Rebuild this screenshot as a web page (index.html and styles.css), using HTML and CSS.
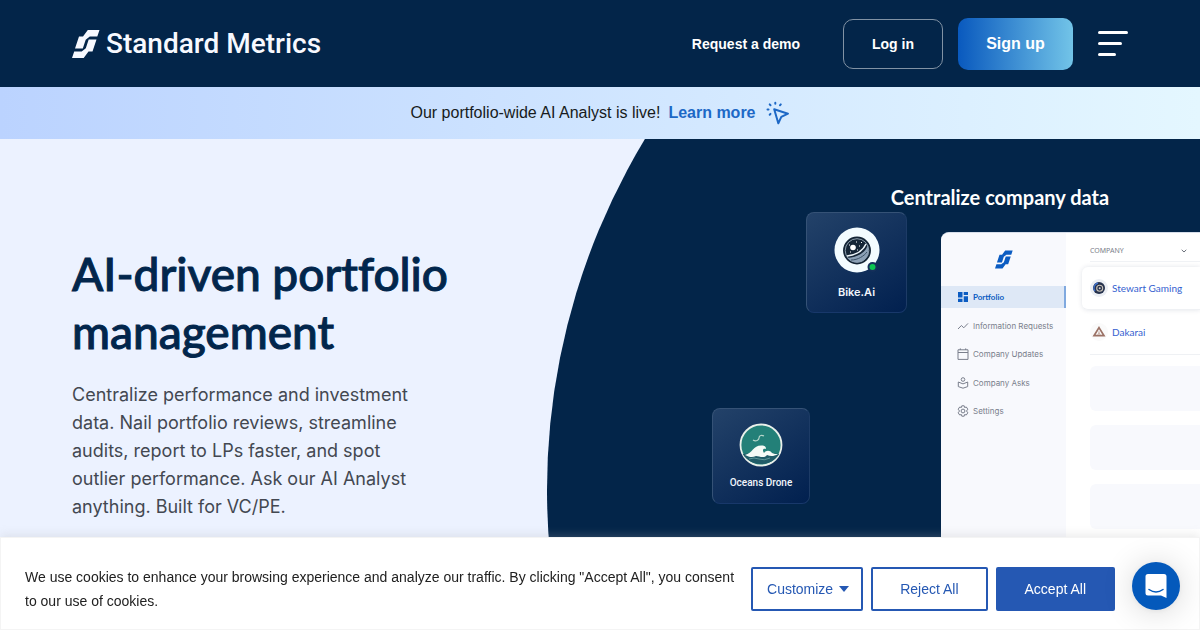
FILE: index.html
```html
<!DOCTYPE html>
<html lang="en">
<head>
<meta charset="utf-8">
<meta name="viewport" content="width=device-width, initial-scale=1">
<title>Standard Metrics</title>
<link rel="stylesheet" href="styles.css">
</head>
<body>
<svg class="defs" aria-hidden="true">
  <symbol id="mark" viewBox="0 0 28 28">
    <path d="M15.8 0H27.500L25.300 6.600H17.800L13.700 9.800L10.800 18.600H3L7 6.600H11ZM11.700 28H0L2.200 21.400H9.700L13.800 18.200L16.700 9.400H24.500L20.500 21.400H16.500Z"/>
  </symbol>
</svg>

<header class="header">
  <a class="logo" href="#">
    <svg class="logo-mark" aria-hidden="true"><use href="#mark"/></svg>
    <span>Standard Metrics</span>
  </a>
  <nav class="nav">
    <a class="nav-link" href="#">Request a demo</a>
    <a class="login" href="#">Log in</a>
    <a class="signup" href="#">Sign up</a>
    <button class="menu" type="button" aria-label="Menu"><span></span><span></span><span></span></button>
  </nav>
</header>

<div class="banner">
  <span>Our portfolio-wide AI Analyst is live!</span>
  <a class="banner-link" href="#">Learn more
    <svg class="cursor" viewBox="0 0 24 24" aria-hidden="true"><path d="M8.2 8.2L22 12.7L15.3 15.8L12.3 22.300Z"/><path d="M9.300 1.8V2.800M3.700 3.400L4.500 4.200M1.500 8.600H2.500M3.700 13.700L4.500 12.900M14 4.200L14.800 3.400"/></svg>
  </a>
</div>

<main class="hero">
  <section class="copy">
    <h1 class="title">AI-driven portfolio management</h1>
    <p class="lead">Centralize performance and investment data. Nail portfolio reviews, streamline audits, report to LPs faster, and spot outlier performance. Ask our AI Analyst anything. Built for VC/PE.</p>
  </section>

  <section class="visual">
    <h2 class="visual-title">Centralize company data</h2>
    <div class="app">
      <aside class="side">
        <svg class="side-mark" aria-hidden="true"><use href="#mark"/></svg>
        <ul class="side-list">
          <li class="side-item active">
            <svg viewBox="0 0 12 12" aria-hidden="true"><path class="solid" d="M1 1H5.5V6.5H1ZM6.7 1H11V4H6.7ZM6.7 5.3H11V11H6.7ZM1 7.8H5.5V11H1Z"/></svg>Portfolio</li>
          <li class="side-item">
            <svg viewBox="0 0 12 12" aria-hidden="true"><path d="M1 9L4.4 5.5L6.8 7.8L11 3.4"/></svg>Information Requests</li>
          <li class="side-item">
            <svg viewBox="0 0 12 12" aria-hidden="true"><path d="M1 1.8H11V11.4H1ZM1 4.5H11M3.3 .4V2M8.7 .4V2"/></svg>Company Updates</li>
          <li class="side-item">
            <svg viewBox="0 0 12 12" aria-hidden="true"><circle cx="6" cy="2.5" r="1.8"/><path d="M1.3 5V9.6L6 11.2L10.7 9.6V5L6 6.9Z"/></svg>Company Asks</li>
          <li class="side-item">
            <svg viewBox="0 0 12 12" aria-hidden="true"><path d="M4.8 .8H7.2L7.6 2.5L9.3 2L10.8 4.2L9.5 6L10.8 7.8L9.3 10L7.6 9.5L7.2 11.2H4.8L4.4 9.5L2.7 10L1.2 7.8L2.5 6L1.2 4.2L2.7 2L4.4 2.5Z"/><circle cx="6" cy="6" r="1.9"/></svg>Settings</li>
        </ul>
      </aside>
      <div class="companies">
        <div class="companies-head">
          <span>COMPANY</span>
          <svg viewBox="0 0 8 8" aria-hidden="true"><path d="M1.7 2.8L4 5L6.3 2.8"/></svg>
        </div>
        <div class="company raised">
          <svg viewBox="0 0 18 18" aria-hidden="true"><circle cx="9" cy="9" r="9" fill="#eceff4"/><circle cx="9" cy="9" r="6" fill="#26324d"/><path d="M5 12A5 5 0 0 1 8 4" fill="none" stroke="#3d70cc" stroke-width="1.3"/><circle cx="9.7" cy="9.2" r="3" fill="none" stroke="#c9c2b8" stroke-width="1.1"/><circle cx="9.7" cy="9.2" r="1" fill="#d8d0c6"/></svg>
          <a href="#">Stewart Gaming</a>
        </div>
        <div class="company">
          <svg viewBox="0 0 18 18" aria-hidden="true"><circle cx="9" cy="9" r="9" fill="#fafafa"/><path d="M9 4.6L14 12.7H4Z" fill="none" stroke="#9b7266" stroke-width="1.7"/><path d="M9 8V12M7.6 12L9 9.5L10.4 12" fill="none" stroke="#c3aaa1" stroke-width=".8"/></svg>
          <a href="#">Dakarai</a>
        </div>
        <div class="blank"></div>
        <div class="blank"></div>
        <div class="blank"></div>
      </div>
    </div>

    <div class="card card-bike">
      <svg class="card-icon" viewBox="0 0 46 46" aria-hidden="true">
        <circle cx="23" cy="23" r="22.5" fill="#f3fcff"/>
        <circle cx="23" cy="23.5" r="13.2" fill="#142536" stroke="#142536" stroke-width="1.5"/>
        <circle cx="23" cy="23.5" r="11.8" fill="none" stroke="#a9bdca" stroke-width=".8"/>
        <path d="M33.500 18C32 26 23 30 13.500 31C18 37 28 37 32 31C35 28 35 23 33.500 18Z" fill="#8ba0b5"/>
        <path d="M13 29C21 28 29 24 32 17" fill="none" stroke="#eef7fb" stroke-width="1.500"/>
        <path d="M17 33C24 33 30 29 33 25" fill="none" stroke="#3c5368" stroke-width="1"/>
        <circle cx="19" cy="20.5" r="2.8" fill="#fff"/>
        <path d="M22 15H23M27 15.5H28M25 19H26M15 18H16M16 25H17M23 23H24" stroke="#fff" stroke-width="1"/>
        <circle cx="38.5" cy="40" r="5" fill="#15305a"/><circle cx="38.5" cy="40" r="3" fill="#0cc552"/>
      </svg>
      <span>Bike.Ai</span>
    </div>
    <div class="card card-oceans">
      <svg class="card-icon" viewBox="0 0 44 44" aria-hidden="true">
        <circle cx="22" cy="22" r="20.5" fill="#238078" stroke="#e9f0ea" stroke-width="1.8"/>
        <path d="M3.7 31Q22 28 40.3 31C36 38 29 41 22 41S8 38 3.7 31Z" fill="#215c68"/>
        <path d="M6 32C14 30 14 22 23 22.5C26 22.5 27 24 27 26C24 25 23 27 25 30C27 27 31 27 33 30C35 31 37 31 39 31C34 34 31 33 28 32C25 36 20 33 17 33C13 35 10 34 6 32Z" fill="#f5faf6"/>
        <path d="M14 17C17 19 20 17 20 15C20 12 23 12 25 13" fill="none" stroke="#b6d5ca" stroke-width="1.2"/>
        <path d="M10 36Q15 34 20 36T31 35" fill="none" stroke="#6fa5a5" stroke-width=".8"/>
      </svg>
      <span>Oceans Drone</span>
    </div>
  </section>
</main>

<section class="cookies" aria-label="Cookie consent">
  <p class="cookies-text">We use cookies to enhance your browsing experience and analyze our traffic. By clicking "Accept All", you consent to our use of cookies.</p>
  <div class="cookies-actions">
    <button class="btn customize" type="button">Customize <i class="caret"></i></button>
    <button class="btn" type="button">Reject All</button>
    <button class="btn filled" type="button">Accept All</button>
  </div>
</section>

<button class="chat" type="button" aria-label="Open chat">
  <svg viewBox="0 0 24 26" aria-hidden="true"><path d="M4 1H20Q22.5 1 22.5 3.5V25L17 22.5H4Q1.500 22.500 1.500 20V3.500Q1.500 1 4 1Z" fill="#fff"/><path d="M5 16.500Q12 21.500 19 16.500" fill="none" stroke="#0459bb" stroke-width="1.500" stroke-linecap="round"/></svg>
</button>
</body>
</html>
```
FILE: styles.css
```css
* {
  box-sizing: border-box;
}

body {
  margin: 0;
  min-height: 100vh;
  display: flex;
  flex-direction: column;
  font-family: "Liberation Sans", Arial, sans-serif;
  background: #ecf2ff;
}

a {
  text-decoration: none;
}

.defs {
  display: none;
}

/* Header */
.header {
  display: flex;
  align-items: center;
  justify-content: space-between;
  height: 87px;
  padding: 0 72px;
  background: #032549;
}

.logo {
  display: flex;
  align-items: center;
  gap: 6px;
  color: #f7f9ff;
  font: 500 28px/36px Roboto, sans-serif;
}

.logo-mark {
  width: 28px;
  height: 28px;
  fill: #f7f9ff;
}

.nav {
  display: flex;
  align-items: center;
}

.nav-link,
.login {
  color: #fff;
  font-weight: 700;
  font-size: 14px;
}

.login,
.signup {
  display: flex;
  align-items: center;
  justify-content: center;
}

.login {
  width: 100px;
  height: 50px;
  margin: 0 15px 0 43px;
  border: 1px solid #8192a4;
  border-radius: 10px;
}

.signup {
  width: 115px;
  height: 52px;
  border-radius: 10px;
  background: linear-gradient(90deg, #0959be, #72c4e8);
  color: #fff;
  font-weight: 700;
  font-size: 16px;
}

.menu {
  display: flex;
  flex-direction: column;
  gap: 8px;
  width: 30px;
  margin-left: 25px;
  padding: 0;
  border: 0;
  background: none;
}

.menu span {
  width: 30px;
  height: 3px;
  border-radius: 2px;
  background: #fff;
}

.menu span:nth-child(2) {
  width: 24px;
}

.menu span:nth-child(3) {
  width: 18px;
}

/* Announcement */
.banner {
  display: flex;
  align-items: center;
  justify-content: center;
  gap: 8px;
  height: 52px;
  background: linear-gradient(90deg, #bbd3ff, #e4f7ff);
  color: #171b20;
  font-size: 16px;
}

.banner-link {
  display: flex;
  align-items: center;
  gap: 10px;
  color: #1d68c6;
  font-weight: 700;
}

.cursor {
  width: 24px;
  height: 24px;
  fill: none;
  stroke: #1d68c6;
  stroke-width: 2;
  stroke-linecap: round;
  stroke-linejoin: round;
}

/* Hero */
.hero {
  flex: 1;
  display: grid;
  grid-template-columns: 1fr 1fr;
  overflow: hidden;
}

.copy {
  padding: 106px 72px 0;
}

.title {
  max-width: 400px;
  margin: 0 0 20px;
  color: #02264c;
  font: 500 46px/58px Lato, sans-serif;
  font-variant-ligatures: none;
  -webkit-text-stroke: 1px #02264c;
}

.lead {
  max-width: 360px;
  margin: 0;
  color: #434851;
  font: 400 18px/28px Inter, sans-serif;
}

.visual {
  position: relative;
  padding-top: 46px;
}

.visual::before {
  content: "";
  position: absolute;
  left: -53px;
  top: -327px;
  width: 1356px;
  height: 1356px;
  border-radius: 50%;
  background: #032549;
}

.visual-title {
  position: relative;
  margin: 0 0 23px;
  padding-left: 200px;
  color: #fff;
  font: 700 20px/24px Lato, sans-serif;
  text-align: center;
}

.app {
  position: relative;
  display: flex;
  height: 398px;
  margin-left: 341px;
  overflow: hidden;
  border-top: 1px solid #d7deea;
  border-radius: 8px 0 0 0;
  background: #fff;
}

.side {
  flex: none;
  width: 125px;
  padding-top: 17px;
  background: #f8f9fd;
}

.side-mark {
  display: block;
  width: 18px;
  height: 19px;
  margin: 0 auto 17px;
  fill: #0b5cc2;
}

.side-list {
  display: flex;
  flex-direction: column;
  justify-content: space-between;
  height: 136px;
  margin: 0;
  padding: 0;
  list-style: none;
}

.side-item {
  display: flex;
  align-items: center;
  gap: 4px;
  height: 22px;
  padding-left: 16px;
  border-right: 2px solid transparent;
  color: #7a7f8c;
  font: 400 8px/12px Inter, sans-serif;
}

.side-item svg {
  width: 12px;
  height: 12px;
  fill: none;
  stroke: currentColor;
  stroke-width: 1;
}

.side-item .solid {
  fill: currentColor;
  stroke: none;
}

.active {
  border-color: #80a9df;
  background: #dee8f6;
  color: #0b5cc2;
  font-family: Lato, sans-serif;
  font-weight: 700;
}

.companies {
  flex: 1;
  padding: 8px 0 0 24px;
}

.companies-head {
  display: flex;
  align-items: center;
  justify-content: space-between;
  height: 21px;
  padding-right: 12px;
  border-bottom: 1px solid #f0f2f5;
  color: #7b808a;
  font: 400 7px/12px "Noto Sans", sans-serif;
}

.companies-head svg {
  width: 8px;
  height: 8px;
  fill: none;
  stroke: #6b707a;
  stroke-width: 1;
}

.company {
  display: flex;
  align-items: center;
  gap: 4px;
  height: 45px;
  border-bottom: 1px solid #eff1f4;
  font: 400 10px/12px Lato, sans-serif;
}

.company svg {
  width: 18px;
  height: 18px;
}

.company a {
  color: #3461d0;
}

.raised {
  height: 43px;
  margin: 5px 0 0 -8px;
  padding-left: 8px;
  border-radius: 6px 0 0 6px;
  box-shadow: 0 0 5px #00254b1f;
}

.blank {
  height: 45px;
  margin: 11px 0 14px;
  border-radius: 6px 0 0 6px;
  background: #f8f9fd;
}

.card {
  position: absolute;
  display: flex;
  flex-direction: column;
  align-items: center;
  border: 1px solid #355276;
  border-right-color: #1d3b66;
  border-bottom-color: #18386a;
  border-radius: 8px;
  background: linear-gradient(145deg, #234269, #01204f);
  color: #f1f5fb;
}

.card-bike {
  left: 206px;
  top: 73px;
  width: 101px;
  height: 101px;
  padding-top: 14px;
  font: 600 11px/14px Inter, sans-serif;
}

.card-bike .card-icon {
  width: 46px;
  height: 46px;
  margin-bottom: 12px;
}

.card-oceans {
  left: 112px;
  top: 269px;
  width: 98px;
  height: 96px;
  padding-top: 14px;
  font: 500 10px/14px Roboto, sans-serif;
}

.card-oceans .card-icon {
  width: 44px;
  height: 44px;
  margin-bottom: 9px;
}

/* Cookie notice */
.cookies {
  position: fixed;
  right: 0;
  bottom: 0;
  left: 0;
  display: flex;
  align-items: center;
  gap: 16px;
  padding: 27px 84px 16px 24px;
  border: 1px solid #f4f4f4;
  background: #fff;
  box-shadow: 0 -1px 10px #acabab4d;
}

.cookies-text {
  flex: 1;
  margin: 0;
  color: #212121;
  font-size: 14px;
  line-height: 24px;
}

.cookies-actions {
  display: flex;
  gap: 8px;
}

.btn {
  height: 44px;
  padding: 0 27px;
  border: 2px solid #2558b3;
  border-radius: 2px;
  background: transparent;
  color: #2558b3;
  font: 400 14px/20px "Liberation Sans", Arial, sans-serif;
  white-space: nowrap;
}

.customize {
  display: flex;
  align-items: center;
  gap: 6px;
  padding: 0 12px 0 14px;
}

.caret {
  border: 5px solid transparent;
  border-top: 6px solid #2558b3;
  border-bottom: 0;
}

.filled {
  background: #2558b3;
  color: #fff;
}

.chat {
  position: fixed;
  right: 20px;
  bottom: 20px;
  display: flex;
  align-items: center;
  justify-content: center;
  width: 48px;
  height: 48px;
  padding: 0;
  border: 0;
  border-radius: 50%;
  background: #0459bb;
  box-shadow: 0 1px 6px #0000000f, 0 2px 32px #00000029;
}

.chat svg {
  width: 24px;
  height: 26px;
}
```
